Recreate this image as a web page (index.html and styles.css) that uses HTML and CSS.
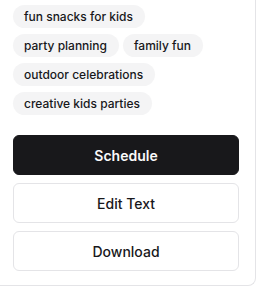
FILE: index.html
```html
<!DOCTYPE html>
<html>
<head>
<meta charset="utf-8">
<link rel="stylesheet" href="styles.css">
</head>
<body>
<div class="card">
  <div class="tags">
    <span class="tag">fun snacks for kids</span>
    <span class="tag">party planning</span>
    <span class="tag">family fun</span>
    <span class="tag">outdoor celebrations</span>
    <span class="tag">creative kids parties</span>
  </div>
  <div class="actions">
    <button class="btn primary">Schedule</button>
    <button class="btn">Edit Text</button>
    <button class="btn">Download</button>
  </div>
</div>
</body>
</html>
```
FILE: styles.css
```css
html, body {
  margin: 0;
  padding: 0;
  background: #ffffff;
}
body {
  font-family: Inter, "Noto Sans", sans-serif;
  color: #18181b;
  width: 259px;
  height: 288px;
  overflow: hidden;
}
.card {
  width: 256px;
  box-sizing: border-box;
  padding: 5px 16px 14px 13px;
  border-right: 1px solid #e4e4e7;
  border-bottom: 1px solid #e4e4e7;
  border-bottom-right-radius: 8px;
  background: #fff;
}
.tags {
  display: flex;
  flex-wrap: wrap;
  row-gap: 6px;
  column-gap: 4px;
  margin-bottom: 20px;
}
.tag {
  display: inline-block;
  background: #f4f4f5;
  border-radius: 12px;
  padding: 4px 12px 4px 11px;
  font-size: 12px;
  line-height: 15px;
  font-weight: 500;
  color: #18181b;
}
.actions {
  display: flex;
  flex-direction: column;
  gap: 8px;
}
.btn {
  height: 40px;
  width: 100%;
  box-sizing: border-box;
  border: 1px solid #e4e4e7;
  border-radius: 6px;
  background: #fff;
  font-family: Inter, "Noto Sans", sans-serif;
  font-size: 14px;
  font-weight: 500;
  color: #18181b;
  padding: 0;
}
.btn.primary {
  background: #18181b;
  border-color: #18181b;
  color: #fafafa;
  font-weight: 600;
}
```
